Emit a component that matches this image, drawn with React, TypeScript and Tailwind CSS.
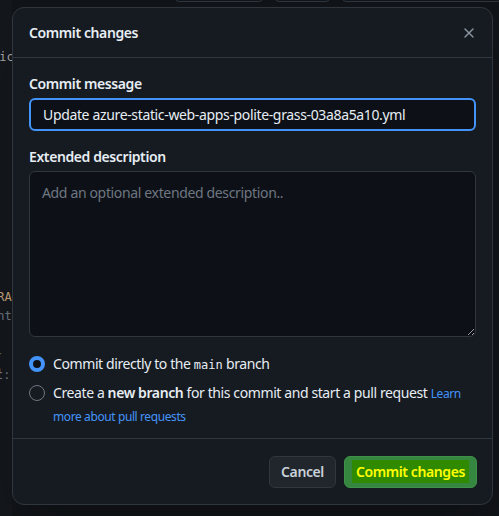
import React, { useState } from 'react';
import { X } from 'lucide-react';

const font = { fontFamily: '"Segoe UI", "Noto Sans", "Liberation Sans", sans-serif' };

const CommitDialog: React.FC = () => {
  const [message, setMessage] = useState('Update azure-static-web-apps-polite-grass-03a8a5a10.yml');
  const [target, setTarget] = useState<'direct' | 'branch'>('direct');

  return (
    <div className="w-[481px] h-[498px] flex flex-col rounded-xl border border-[#30363d] bg-[#161b22] text-[#e6edf3] tracking-[-0.025em] shadow-2xl">
      <div className="h-[50px] flex items-center justify-between pl-[16px] pr-[15px] border-b border-[#30363d]">
        <h2 className="text-sm font-semibold">Commit changes</h2>
        <button className="text-[#8d96a0]" title="Close">
          <X size={16} strokeWidth={2} />
        </button>
      </div>

      <div className="flex-1 px-[16px] pt-[16px] flex flex-col border-b border-[#30363d]">
        <label className="text-sm font-semibold leading-5 mb-[4px]">Commit message</label>
        <input
          value={message}
          onChange={(e) => setMessage(e.target.value)}
          className="h-[33px] px-[12px] rounded-md bg-[#0d1117] border-2 border-[#4493f8] text-sm text-[#e6edf3] tracking-[-0.025em] outline-none"
        />
        <label className="text-sm font-semibold leading-5 mt-[16px] mb-[4px]">Extended description</label>
        <textarea
          placeholder="Add an optional extended description.."
          className="h-[166px] px-[12px] py-[11px] rounded-md bg-[#0d1117] border border-[#30363d] text-sm text-[#e6edf3] tracking-[-0.025em] placeholder-[#6e7681] outline-none resize-y"
        />

        <div className="mt-[17px] flex flex-col gap-[8px] text-sm">
          <label className="flex items-center gap-[8px] cursor-pointer" onClick={() => setTarget('direct')}>
            <span
              className={`w-[16px] h-[16px] rounded-full shrink-0 ${
                target === 'direct' ? 'border-[4px] border-[#4493f8] bg-[#0d1117]' : 'border border-[#6e7681]'
              }`}
            />
            <span>
              Commit directly to the{' '}
              <code className="text-[12px] tracking-normal" style={{ fontFamily: '"DejaVu Sans Mono", monospace' }}>main</code> branch
            </span>
          </label>
          <label className="flex items-start gap-[8px] cursor-pointer" onClick={() => setTarget('branch')}>
            <span
              className={`mt-[3px] w-[16px] h-[16px] rounded-full shrink-0 ${
                target === 'branch' ? 'border-[4px] border-[#4493f8] bg-[#0d1117]' : 'border border-[#6e7681]'
              }`}
            />
            <p className="leading-[22px]">
              Create a <b className="font-semibold">new branch</b> for this commit and start a pull request{' '}
              <a className="text-[#4493f8] text-[12px]">Learn more about pull requests</a>
            </p>
          </label>
        </div>
      </div>

      <div className="h-[65px] flex items-center justify-end gap-[8px] px-[15px]">
        <button className="h-[32px] px-[11px] rounded-md bg-[#21262d] border border-[#30363d] text-sm font-semibold text-[#c9d1d9]">
          Cancel
        </button>
        <button className="h-[32px] px-[7px] rounded-md bg-[#35863f] border border-[#3f9149] text-sm font-semibold">
          <span className="px-[4px] py-[2px] bg-[#2f8a00] text-[#ffff00]">Commit changes</span>
        </button>
      </div>
    </div>
  );
};

const App: React.FC = () => {
  return (
    <div className="w-[499px] h-[516px] overflow-hidden bg-[#111418] relative" style={font}>
      {/* page behind the overlay */}
      <div className="absolute left-0 top-0 w-[12px] h-full overflow-hidden bg-[#14171c] text-[12px] leading-[14px] text-[#6e7681]" style={{ fontFamily: '"DejaVu Sans Mono", monospace' }}>
        <div className="absolute top-[50px] -left-[8px] text-[#a5a5a5]">tic</div>
        <div className="absolute top-[290px] -left-[10px] text-[#c2a27a]">GRA</div>
        <div className="absolute top-[309px] -left-[10px]">ent</div>
        <div className="absolute top-[349px] -left-[6px]">r a</div>
        <div className="absolute top-[368px] -left-[4px]">t:</div>
      </div>
      <div className="absolute top-[-6px] left-[175px] w-[88px] h-[8px] rounded-md border border-[#30363d]" />
      <div className="absolute top-[-6px] left-[275px] w-[55px] h-[8px] rounded-md border border-[#30363d]" />
      <div className="absolute top-[-6px] left-[342px] w-[160px] h-[8px] rounded-md border border-[#30363d]" />

      <div className="relative pl-[12px] pt-[7px]">
        <CommitDialog />
      </div>
    </div>
  );
};

export default App;
